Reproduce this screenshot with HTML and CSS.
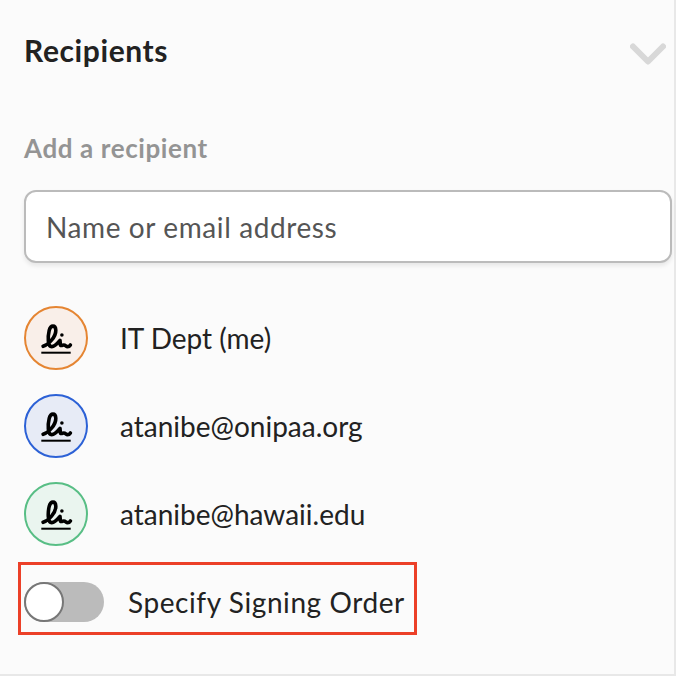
FILE: index.html
```
<!DOCTYPE html>
<html lang="en">
<head>
  <meta charset="UTF-8">
  <title>Recipients</title>
  <link rel="stylesheet" href="styles.css">
</head>
<body>
  <svg width="0" height="0" class="sprite">
    <symbol id="signature" viewBox="0 0 64 64">
      <g fill="none" stroke="#000" stroke-linecap="round" stroke-linejoin="round">
        <path stroke-width="3.6" d="M19.1 40.3C24.5 38.6 32 31 31.8 24.2C31.6 18.8 26.6 18.6 25.2 24.4C23.8 30.4 23.4 40.6 27.8 40.6C31 40.6 33.8 37 36 34.4L36.4 39.2C37.4 40.2 38.6 39 39.8 39C41.8 39 41.8 40.6 43.6 40.6C45 40.6 45.8 39.8 46.4 38.9"/>
        <path stroke-width="2" stroke-linecap="butt" d="M17.3 46.7H46.7"/>
      </g>
      <circle cx="37.9" cy="29" r="1.8"/>
    </symbol>
  </svg>

  <div class="panel">
    <div class="header">
      <h1>Recipients</h1>
      <svg class="chevron" width="36" height="22" viewBox="0 0 36 22">
        <path d="M3 3.5L18 18.5L33 3.5"/>
      </svg>
    </div>

    <label class="label" for="recipient">Add a recipient</label>
    <input class="recipient-input" id="recipient" type="text" placeholder="Name or email address">

    <ul class="recipients">
      <li>
        <span class="avatar orange"><svg><use href="#signature"/></svg></span>
        <span>IT Dept (me)</span>
      </li>
      <li>
        <span class="avatar blue"><svg><use href="#signature"/></svg></span>
        <span>atanibe@onipaa.org</span>
      </li>
      <li>
        <span class="avatar green"><svg><use href="#signature"/></svg></span>
        <span>atanibe@hawaii.edu</span>
      </li>
    </ul>

    <div class="signing-order">
      <span class="toggle"><span class="knob"></span></span>
      <span>Specify Signing Order</span>
    </div>
  </div>
</body>
</html>
```
FILE: styles.css
```
* {
  box-sizing: border-box;
}

body {
  margin: 0;
  font-family: Lato, "Liberation Sans", sans-serif;
  font-size: 28px;
  color: #222;
}

.sprite {
  display: block;
}

.panel {
  width: 676px;
  height: 676px;
  padding: 30px 2px 0 24px;
  background: #fbfbfb;
  border-right: 2px solid #e8e8e8;
  border-bottom: 2px solid #e8e8e8;
}

.header {
  display: flex;
  justify-content: space-between;
  align-items: center;
  height: 40px;
  padding-right: 6px;
}

h1 {
  margin: 0;
  font-size: 30px;
  line-height: 40px;
  letter-spacing: 0.6px;
}

.chevron {
  margin-top: 8px;
  fill: none;
  stroke: #d8d8d8;
  stroke-width: 6;
  stroke-linecap: round;
  stroke-linejoin: round;
}

.label {
  display: block;
  margin-top: 61px;
  font-size: 26px;
  font-weight: bold;
  line-height: 34px;
  letter-spacing: 0.6px;
  color: #949494;
}

.recipient-input {
  display: block;
  width: 648px;
  height: 73px;
  margin-top: 25px;
  padding: 0 20px;
  border: 2px solid #bbb;
  border-radius: 12px;
  background: #fff;
  box-shadow: 0 3px 4px rgba(0, 0, 0, 0.08);
  font: inherit;
  letter-spacing: 0.6px;
}

.recipient-input::placeholder {
  color: #555;
}

.recipients {
  display: flex;
  flex-direction: column;
  gap: 24px;
  margin: 43px 0 0;
  padding: 0;
  list-style: none;
}

.recipients li {
  display: flex;
  align-items: center;
  gap: 32px;
}

.avatar {
  width: 64px;
  height: 64px;
  border: 2px solid;
  border-radius: 50%;
}

.avatar svg {
  display: block;
  width: 64px;
  height: 64px;
  margin: -2px;
}

.orange {
  border-color: #e58532;
  background: #f9efe9;
}

.blue {
  border-color: #2c61d6;
  background: #e7ebf6;
}

.green {
  border-color: #58be85;
  background: #eaf5ef;
}

.signing-order {
  display: flex;
  align-items: center;
  gap: 24px;
  width: 399px;
  height: 73px;
  margin: 16px 0 0 -6px;
  padding: 7px 0 0 3px;
  border: 3px solid #ec4028;
  letter-spacing: 0.58px;
}

.toggle {
  width: 80px;
  height: 40px;
  border-radius: 20px;
  background: #bbb;
}

.knob {
  display: block;
  width: 40px;
  height: 40px;
  border: 2px solid #777;
  border-radius: 50%;
  background: #fff;
}
```
